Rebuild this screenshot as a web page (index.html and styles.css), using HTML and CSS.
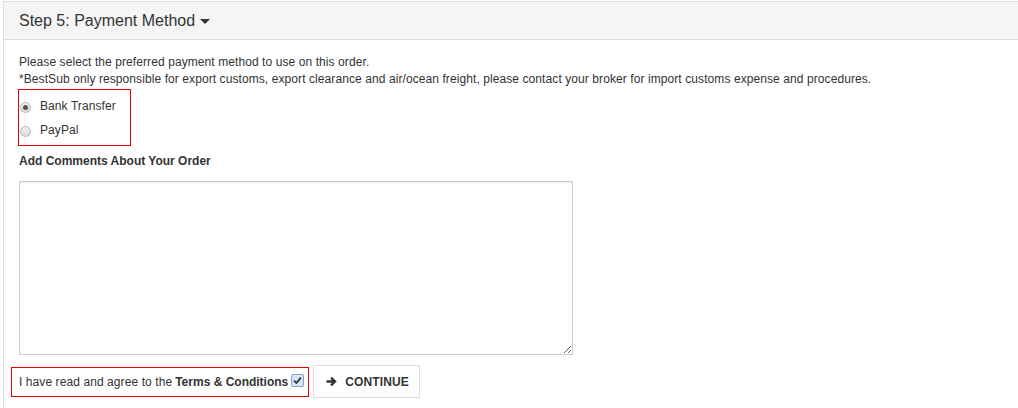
FILE: index.html
```html
<!DOCTYPE html>
<html>
<head>
<meta charset="utf-8">
<link rel="stylesheet" href="styles.css">
</head>
<body>
<div class="panel">
  <div class="panel-heading">
    <span class="panel-title">Step 5: Payment Method</span><span class="caret"></span>
  </div>
  <div class="panel-body">
    <p class="intro">Please select the preferred payment method to use on this order.<br>*BestSub only responsible for export customs, export clearance and air/ocean freight, please contact your broker for import customs expense and procedures.</p>
    <div class="methods">
      <label class="method"><input type="radio" name="pm" class="radio" checked><span>Bank Transfer</span></label>
      <label class="method"><input type="radio" name="pm" class="radio"><span>PayPal</span></label>
    </div>
    <p class="comments-label">Add Comments About Your Order</p>
    <textarea class="comments"></textarea>
    <div class="actions">
      <label class="agree">I have read and agree to the <b>Terms &amp; Conditions</b><span class="check"><svg viewBox="0 0 10 10" width="9" height="9"><path d="M1.2 5.2 L3.8 7.8 L8.8 1.8" fill="none" stroke="#333" stroke-width="2"/></svg></span></label>
      <button class="btn"><svg class="arrow" viewBox="0 0 12 12" width="11" height="11"><path d="M0.5 6 H9 M5.5 1.8 L9.8 6 L5.5 10.2" fill="none" stroke="#333" stroke-width="2.6" stroke-linejoin="miter"/></svg>CONTINUE</button>
    </div>
  </div>
</div>
</body>
</html>
```
FILE: styles.css
```css
html, body {
  margin: 0;
  padding: 0;
  background: #fff;
  overflow: hidden;
}
body {
  font-family: "Liberation Sans", Arial, sans-serif;
  color: #333;
}
.panel {
  margin: 1px 0 0 3px;
  border: 1px solid #ddd;
  border-right: 0;
  min-height: 420px;
}
.panel-heading {
  height: 37px;
  background: #f5f5f5;
  border-bottom: 1px solid #ddd;
  display: flex;
  align-items: center;
  padding-left: 15px;
}
.panel-title {
  font-size: 16px;
  color: #333;
}
.caret {
  display: inline-block;
  width: 0;
  height: 0;
  margin-left: 5px;
  margin-top: 2px;
  border-top: 5px solid #333;
  border-left: 5px solid transparent;
  border-right: 5px solid transparent;
}
.panel-body {
  padding: 14px 15px 0 15px;
  font-size: 12px;
  letter-spacing: 0.085px;
}
.intro {
  margin: 0;
  line-height: 17px;
}
.methods {
  margin-top: 1px;
  width: 111px;
  height: 51px;
  border: 1px solid #e00;
  margin-left: -1px;
  display: flex;
  flex-direction: column;
  padding-top: 4px;
  box-sizing: content-box;
}
.method {
  display: flex;
  align-items: center;
  height: 24px;
  font-size: 12px;
}
.radio {
  appearance: none;
  -webkit-appearance: none;
  margin: 2px 9px 0 1px;
  width: 11px;
  height: 11px;
  border-radius: 50%;
  border: 1px solid #b5b5b5;
  background: linear-gradient(#f0f0f0, #dcdcdc);
  position: relative;
  box-sizing: border-box;
}
.radio:checked::after {
  content: "";
  position: absolute;
  left: 2px;
  top: 2px;
  width: 5px;
  height: 5px;
  border-radius: 50%;
  background: #555;
}
.comments-label {
  margin: 7px 0 0;
  font-weight: bold;
  letter-spacing: 0;
  line-height: 17px;
}
.comments {
  display: block;
  margin-top: 11px;
  width: 554px;
  height: 174px;
  box-sizing: border-box;
  border: 1px solid #ccc;
  box-shadow: inset 0 1px 1px rgba(0,0,0,0.075);
  resize: vertical;
}
.actions {
  display: flex;
  align-items: center;
  margin-top: 10px;
}
.agree {
  margin-left: -8px;
  border: 1px solid #e00;
  height: 30px;
  box-sizing: border-box;
  padding: 0 4px 0 7px;
  display: flex;
  align-items: center;
  font-size: 12px;
  margin-top: 1px;
}
.agree b {
  margin-left: 3px;
  letter-spacing: 0;
}
.check {
  display: inline-flex;
  align-items: center;
  justify-content: center;
  width: 13px;
  height: 13px;
  box-sizing: border-box;
  margin-left: 3px;
  margin-top: -4px;
  border: 1px solid #7da2ce;
  border-radius: 2px;
  background: #d7e5f6;
}
.btn {
  margin-left: 4px;
  height: 33px;
  width: 107px;
  box-sizing: border-box;
  border: 1px solid #ddd;
  background: #fff;
  font-family: "Liberation Sans", Arial, sans-serif;
  font-size: 12px;
  font-weight: bold;
  letter-spacing: 0.1px;
  color: #333;
  display: flex;
  align-items: center;
  padding: 0 0 0 12px;
}
.arrow {
  margin-right: 8px;
}
```
